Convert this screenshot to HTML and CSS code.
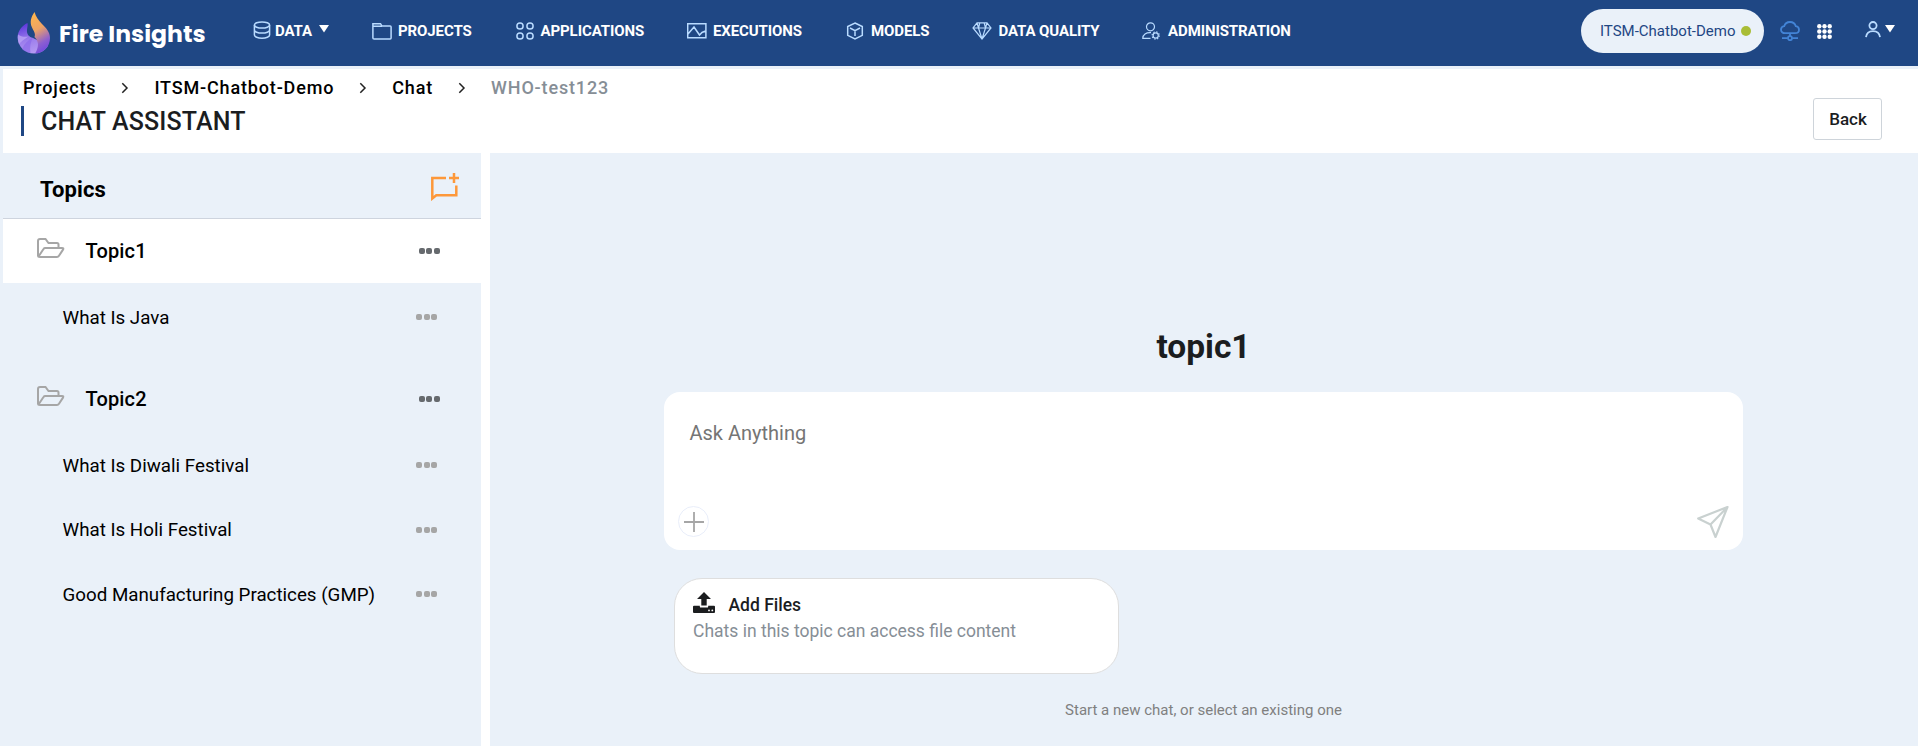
FILE: index.html
```html
<!DOCTYPE html>
<html lang="en">
<head>
<meta charset="utf-8">
<title>Fire Insights - Chat Assistant</title>
<link rel="stylesheet" href="styles.css">
</head>
<body>
<header class="topbar">
  <a class="brand">
    <svg class="brand-mark" width="34" height="42" viewBox="0 0 34 42">
      <defs>
        <linearGradient id="flame" x1="0.3" y1="0" x2="0.6" y2="1">
          <stop offset="0" stop-color="#fdb44d"/><stop offset="0.4" stop-color="#eda366"/><stop offset="0.75" stop-color="#8e60cf"/><stop offset="1" stop-color="#6f48e0"/>
        </linearGradient>
        <linearGradient id="swirl" x1="0.3" y1="0" x2="0.6" y2="1">
          <stop offset="0" stop-color="#5b36dc"/><stop offset="0.5" stop-color="#9a7cec"/><stop offset="1" stop-color="#b79cf3"/>
        </linearGradient>
      </defs>
      <path d="M10.5 11C5 13.500 .7 19 .7 25.500 .7 34.500 8 41.500 17 41.500c6 0 11-3 14-8L16 26c-4-1-6.500-4-6-8 .2-3 1-5 .5-7z" fill="url(#swirl)"/>
      <path d="M17.500 0C14 5 12.500 10 15 15.500c1.500 3.500 4 6 2.500 9.500 0 0 3.500 3 3.500 7.500 0 3.500-1.500 7-3 9C26.500 41.500 33 34.500 33 26c0-6-4-10-8-14-3.500-3.500-6-7-7.500-12z" fill="url(#flame)"/>
      <path d="M1 22.500c3 2.500 7 2.500 10.500 2C7.500 27 4 29.500 2 32 1 29 .3 26 1 22.500z" fill="#b9a4f4" opacity=".8"/>
      <path d="M5 37c2.500-5.500 6-9 11-11.500C13.500 30 12.500 35 13.500 41 10 40.500 7 39 5 37z" fill="#8b68ea" opacity=".65"/>
    </svg>
    <span class="brand-name">Fire Insights</span>
  </a>
  <nav class="menu">
    <a class="menu-item menu-data">
      <svg width="18" height="18" viewBox="0 0 18 18" class="line"><ellipse cx="9" cy="4" rx="7.600" ry="3.100"/><path d="M1.400 4v10c0 1.800 3.400 3.200 7.600 3.200s7.600-1.400 7.600-3.200V4M1.400 9c0 1.700 3.400 3.100 7.600 3.100s7.600-1.400 7.600-3.100"/></svg>
      <span>DATA</span>
      <svg class="caret" width="10" height="8" viewBox="0 0 10 8"><path d="M0 0h10L5 7.500z" fill="#fff"/></svg>
    </a>
    <a class="menu-item menu-projects">
      <svg width="20" height="18" viewBox="0 0 20 18" class="line"><path d="M.9 16V1.700h7.600l1.500 2.400h8.200q.9 0 .9.900v11q0 1-1 1h-16q-1.200 0-1.200-1zM1 4.200h9"/></svg>
      <span>PROJECTS</span>
    </a>
    <a class="menu-item menu-apps">
      <svg width="18" height="18" viewBox="0 0 18 18" class="line"><circle cx="4" cy="4" r="3.100"/><circle cx="14" cy="4" r="3.100"/><circle cx="4" cy="14" r="3.100"/><circle cx="14" cy="14" r="3.100"/></svg>
      <span>APPLICATIONS</span>
    </a>
    <a class="menu-item menu-exec">
      <svg width="20" height="16" viewBox="0 0 20 16" class="line"><path d="M.7.700h18.200v14H.7zM1 11l6-7 5.500 8 2.500-2.500 3.500-1.500"/></svg>
      <span>EXECUTIONS</span>
    </a>
    <a class="menu-item menu-models">
      <svg width="18" height="18" viewBox="0 0 18 18" class="line"><path d="M9 1l7.300 3.500v8.800L9 17l-7.300-3.700V4.500zM4 6l5 2.600L14 6M9 8.600V14"/></svg>
      <span>MODELS</span>
    </a>
    <a class="menu-item menu-quality">
      <svg width="20" height="18" viewBox="0 0 20 18" class="line thin"><path d="M5 .8h10l4 5.200-9 11L1 6zM1 6h18M5 .8L6.500 6 10 17l3.500-11L15 .8M7.800.800L6.500 6M12.200.800L13.500 6"/></svg>
      <span>DATA QUALITY</span>
    </a>
    <a class="menu-item menu-admin">
      <svg width="18" height="18" viewBox="0 0 18 18" class="line thin"><circle cx="8.500" cy="4.800" r="4"/><path d="M9 10.600C4 10.300.8 12.500.8 16.300h7.700"/><circle cx="13.700" cy="13.500" r="2.600"/><circle cx="13.700" cy="13.500" r="3.600" stroke-dasharray="1.400 1.430"/></svg>
      <span>ADMINISTRATION</span>
    </a>
  </nav>
  <div class="tools">
    <div class="project-pill"><span>ITSM-Chatbot-Demo</span><i class="status"></i></div>
    <svg class="cloud" width="20" height="20" viewBox="0 0 20 20"><path d="M5 12.200C2.700 12.200 1 10.700 1 8.700c0-1.900 1.300-3.200 3.200-3.500C5 2.500 7.200 1 10 1s5 1.500 5.800 4.200c1.900.3 3.200 1.600 3.200 3.500 0 2-1.700 3.500-4 3.500zM10 12.200v3M2 17.200h5.800M12.200 17.200H18"/><circle cx="10" cy="17.200" r="2"/></svg>
    <svg class="apps-grid" width="15" height="15" viewBox="0 0 15 15" fill="#fff"><circle cx="2.300" cy="2.300" r="2.200"/><circle cx="7.500" cy="2.300" r="2.200"/><circle cx="12.700" cy="2.300" r="2.200"/><circle cx="2.300" cy="7.500" r="2.200"/><circle cx="7.500" cy="7.500" r="2.200"/><circle cx="12.700" cy="7.500" r="2.200"/><circle cx="2.300" cy="12.700" r="2.200"/><circle cx="7.500" cy="12.700" r="2.200"/><circle cx="12.700" cy="12.700" r="2.200"/></svg>
    <svg class="user" width="16" height="17" viewBox="0 0 16 17"><circle cx="8" cy="4.600" r="3.600"/><path d="M1 16.200C1.500 12 4.500 10.100 8 10.100s6.500 1.900 7 6.100"/></svg>
    <svg class="caret" width="10" height="8" viewBox="0 0 10 8"><path d="M0 0h10L5 7.500z" fill="#fff"/></svg>
  </div>
</header>

<main class="page">
  <section class="heading">
    <div class="heading-left">
      <nav class="crumbs">
        <a class="crumb-projects">Projects</a>
        <svg width="8" height="12" viewBox="0 0 8 12"><path d="M1.300 1.200L6 6l-4.700 4.800"/></svg>
        <a class="crumb-project">ITSM-Chatbot-Demo</a>
        <svg width="8" height="12" viewBox="0 0 8 12"><path d="M1.300 1.200L6 6l-4.700 4.800"/></svg>
        <a class="crumb-chat">Chat</a>
        <svg width="8" height="12" viewBox="0 0 8 12"><path d="M1.300 1.200L6 6l-4.700 4.800"/></svg>
        <span class="current">WHO-test123</span>
      </nav>
      <h1 class="title">CHAT ASSISTANT</h1>
    </div>
    <button class="back">Back</button>
  </section>

  <div class="columns">
    <aside class="sidebar">
      <div class="sidebar-head">
        <h2>Topics</h2>
        <svg width="28" height="28" viewBox="0 0 28 28" fill="none" stroke="#fd983a" stroke-width="2.500"><path d="M15 5H1.300v20.500l4-3.200h20V12.500"/><path d="M23 0v10M18 5h10"/></svg>
      </div>
      <div class="topic selected">
        <svg class="folder" width="28" height="20" viewBox="0 0 28 20"><path d="M1 18V3q0-2 2-2h5.500l3 4H20q1.500 0 1.500 1.500V10M1.500 18.500L6.500 11q.6-1 1.800-1H25q2 0 1 1.600l-4 6.200q-.8 1.200-2 1.200H3q-2 0-2-1.500"/></svg>
        <span>Topic1</span><i class="dots"><b></b><b></b><b></b></i>
      </div>
      <div class="chats">
        <div class="chat"><span>What Is Java</span><i class="dots"><b></b><b></b><b></b></i></div>
      </div>
      <div class="topic">
        <svg class="folder" width="28" height="20" viewBox="0 0 28 20"><path d="M1 18V3q0-2 2-2h5.500l3 4H20q1.500 0 1.500 1.500V10M1.500 18.500L6.500 11q.6-1 1.800-1H25q2 0 1 1.600l-4 6.200q-.8 1.200-2 1.200H3q-2 0-2-1.500"/></svg>
        <span>Topic2</span><i class="dots"><b></b><b></b><b></b></i>
      </div>
      <div class="chats">
        <div class="chat"><span>What Is Diwali Festival</span><i class="dots"><b></b><b></b><b></b></i></div>
        <div class="chat"><span>What Is Holi Festival</span><i class="dots"><b></b><b></b><b></b></i></div>
        <div class="chat"><span>Good Manufacturing Practices (GMP)</span><i class="dots"><b></b><b></b><b></b></i></div>
      </div>
    </aside>

    <section class="workspace">
      <h2 class="topic-name">topic1</h2>
      <div class="composer">
        <div class="placeholder">Ask Anything</div>
        <div class="composer-actions">
          <span class="attach"><svg width="20" height="20" viewBox="0 0 20 20"><path d="M10 0v20M0 10h20" stroke="#a6a6a6" stroke-width="1.800"/></svg></span>
          <svg class="send" width="32" height="32" viewBox="0 0 32 32"><path d="M30.500 1L1.200 12.500l12.300 6L18.500 31zL13.500 18.500"/></svg>
        </div>
      </div>
      <div class="files">
        <div class="files-head">
          <svg width="22" height="21" viewBox="0 0 22 21"><path fill="#1b1d1f" d="M11 0l7 7h-4.300v6.500H8.300V7H4zM1 13.800h5.800v.6q0 1.200 1.200 1.200h6q1.200 0 1.200-1.200v-.6H21q1 0 1 1V20q0 1-1 1H1q-1 0-1-1v-5.200q0-1 1-1z"/><circle cx="16" cy="18.400" r=".9" fill="#fff"/><circle cx="19.300" cy="18.400" r=".9" fill="#fff"/></svg>
          <span>Add Files</span>
        </div>
        <p>Chats in this topic can access file content</p>
      </div>
      <p class="hint">Start a new chat, or select an existing one</p>
    </section>
  </div>
</main>
</body>
</html>
```

FILE: styles.css
```css
* { box-sizing: border-box; }
body {
  margin: 0;
  height: 746px;
  display: flex;
  flex-direction: column;
  overflow: hidden;
  background: #eaf1f9;
  color: #000;
  font-family: Roboto, "Liberation Sans", sans-serif;
}
h1, h2, p { margin: 0; }
svg { flex: none; display: block; }

.topbar {
  flex: none;
  display: flex;
  align-items: flex-start;
  height: 66px;
  background: #1f4784;
  color: #fff;
}
.brand { display: flex; width: 253px; padding: 12px 0 0 17px; }
.brand-name {
  margin: 6px 0 0 8px;
  font: 700 23.5px/32px Poppins, Inter, sans-serif;
  white-space: nowrap;
}
.menu {
  display: grid;
  grid-template-columns: 119px 144px 171px 159px 126px 170px 160px;
}
.menu-item {
  display: flex;
  align-items: center;
  height: 62px;
  font-size: 15px;
  font-weight: 700;
  line-height: 20px;
  letter-spacing: -0.1px;
  white-space: nowrap;
}
.menu-item .line { margin-right: 7px; }
.menu-data .line { margin: 0 4px 2px 0; }
.menu-data .caret { margin: -5px 0 0 7px; }
.menu-projects .line, .menu-exec .line { margin-right: 6px; }
.menu-apps .line, .menu-quality .line { margin-right: 6.5px; }
.menu-admin .line { margin-right: 8px; }
.line { fill: none; stroke: #b9dbff; stroke-width: 1.5; }
.thin { stroke-width: 1.2; }

.tools { display: flex; flex: 1; height: 62px; align-items: center; justify-content: flex-end; padding-right: 23px; }
.project-pill {
  display: flex;
  align-items: center;
  justify-content: space-between;
  width: 183px;
  height: 44px;
  padding: 0 13px 0 19px;
  border-radius: 22px;
  background: #eaf1f9;
  color: #1f4784;
  font-size: 15px;
  white-space: nowrap;
}
.status { width: 10px; height: 10px; border-radius: 50%; background: #a9bd36; }
.cloud { margin: 0 17px 0 16px; fill: none; stroke: #4384d6; stroke-width: 1.8; }
.user { margin: -3px 4px 0 33px; fill: none; stroke: #b9dbff; stroke-width: 1.8; }
.tools .caret { margin-top: -5px; }

.page { flex: 1; display: flex; flex-direction: column; margin: 3px 0 0 3px; background: #fff; }
.heading { display: flex; justify-content: space-between; height: 84px; padding: 7px 36px 0 18px; }
.crumbs {
  display: flex;
  align-items: center;
  height: 22px;
  padding-left: 2px;
  font-size: 18px;
  font-weight: 500;
  letter-spacing: 0.84px;
  white-space: nowrap;
}
.crumbs svg { margin: 1px 25px 0; fill: none; stroke: #222; stroke-width: 1.5; }
.current { color: #868e96; }
.title {
  height: 30px;
  margin-top: 8px;
  padding-left: 17px;
  border-left: 3px solid #1f4784;
  color: #1b1d1f;
  font-size: 25px;
  font-weight: 500;
  letter-spacing: 0.15px;
  line-height: 31px;
}
.back {
  width: 69px;
  height: 42px;
  margin-top: 22px;
  padding: 0 0 0 1px;
  border: 1px solid #ced4da;
  border-radius: 3px;
  background: #fff;
  color: #1b1d1f;
  font: 500 17px/24px Roboto, sans-serif;
}

.columns { flex: 1; display: grid; grid-template-columns: 478px 1fr; gap: 9px; }
.sidebar, .workspace { background: #eaf1f9; }
.sidebar-head {
  display: flex;
  justify-content: space-between;
  height: 66px;
  padding: 20px 22px 0 37px;
  border-bottom: 1px solid #ced4de;
}
.sidebar-head h2 { font-size: 22px; font-weight: 700; letter-spacing: 0.15px; line-height: 33px; }
.topic { display: flex; align-items: center; height: 64px; padding: 0 41.5px 0 34px; font-size: 20px; font-weight: 500; letter-spacing: 0.15px; }
.topic span { flex: 1; margin-left: 20.5px; }
.selected { background: #fff; }
.folder { margin-top: -7px; fill: none; stroke: #a6a6a6; stroke-width: 2; }
.dots { display: flex; gap: 1.5px; color: #666a6e; }
.dots b { width: 6px; height: 6px; border-radius: 2px; background: currentColor; }
.chats { padding: 2px 0 17.5px; }
.chat { display: flex; align-items: center; justify-content: space-between; height: 64.5px; padding: 0 44px 0 59.5px; font-size: 18.75px; }
.chat span { line-height: 24px; padding-top: 1px; }
.chat .dots { color: #a6a6a6; }

.workspace { display: flex; flex-direction: column; align-items: center; padding: 172px 1px 0 0; }
.topic-name { height: 44px; color: #1b1d1f; font-size: 33.5px; font-weight: 700; line-height: 44px; }
.composer {
  display: flex;
  flex-direction: column;
  justify-content: space-between;
  width: 1079px;
  height: 158px;
  margin-top: 23px;
  padding: 29px 14px 12px;
  border-radius: 16px;
  background: #fff;
}
.placeholder { padding-left: 11.5px; color: #757575; font-size: 20px; line-height: 24px; }
.composer-actions { display: flex; justify-content: space-between; align-items: flex-start; }
.attach {
  display: grid;
  place-items: center;
  width: 31px;
  height: 31px;
  border: 1px solid #e9eefa;
  border-radius: 50%;
}
.send { fill: none; stroke: #c9d1d0; stroke-width: 2.2; stroke-linejoin: round; }
.files {
  align-self: flex-start;
  width: 445px;
  height: 96px;
  margin: 28px 0 0 184px;
  padding: 13px 18px;
  border: 1px solid #dedede;
  border-radius: 28px;
  background: #fff;
}
.files-head { display: flex; height: 26px; color: #1b1d1f; font-size: 17.5px; font-weight: 500; line-height: 26px; }
.files-head span { margin-left: 13.5px; }
.files p { color: #868e96; font-size: 17.5px; line-height: 26px; }
.hint { margin-top: 24px; color: #808080; font-size: 15px; line-height: 24px; }
```
